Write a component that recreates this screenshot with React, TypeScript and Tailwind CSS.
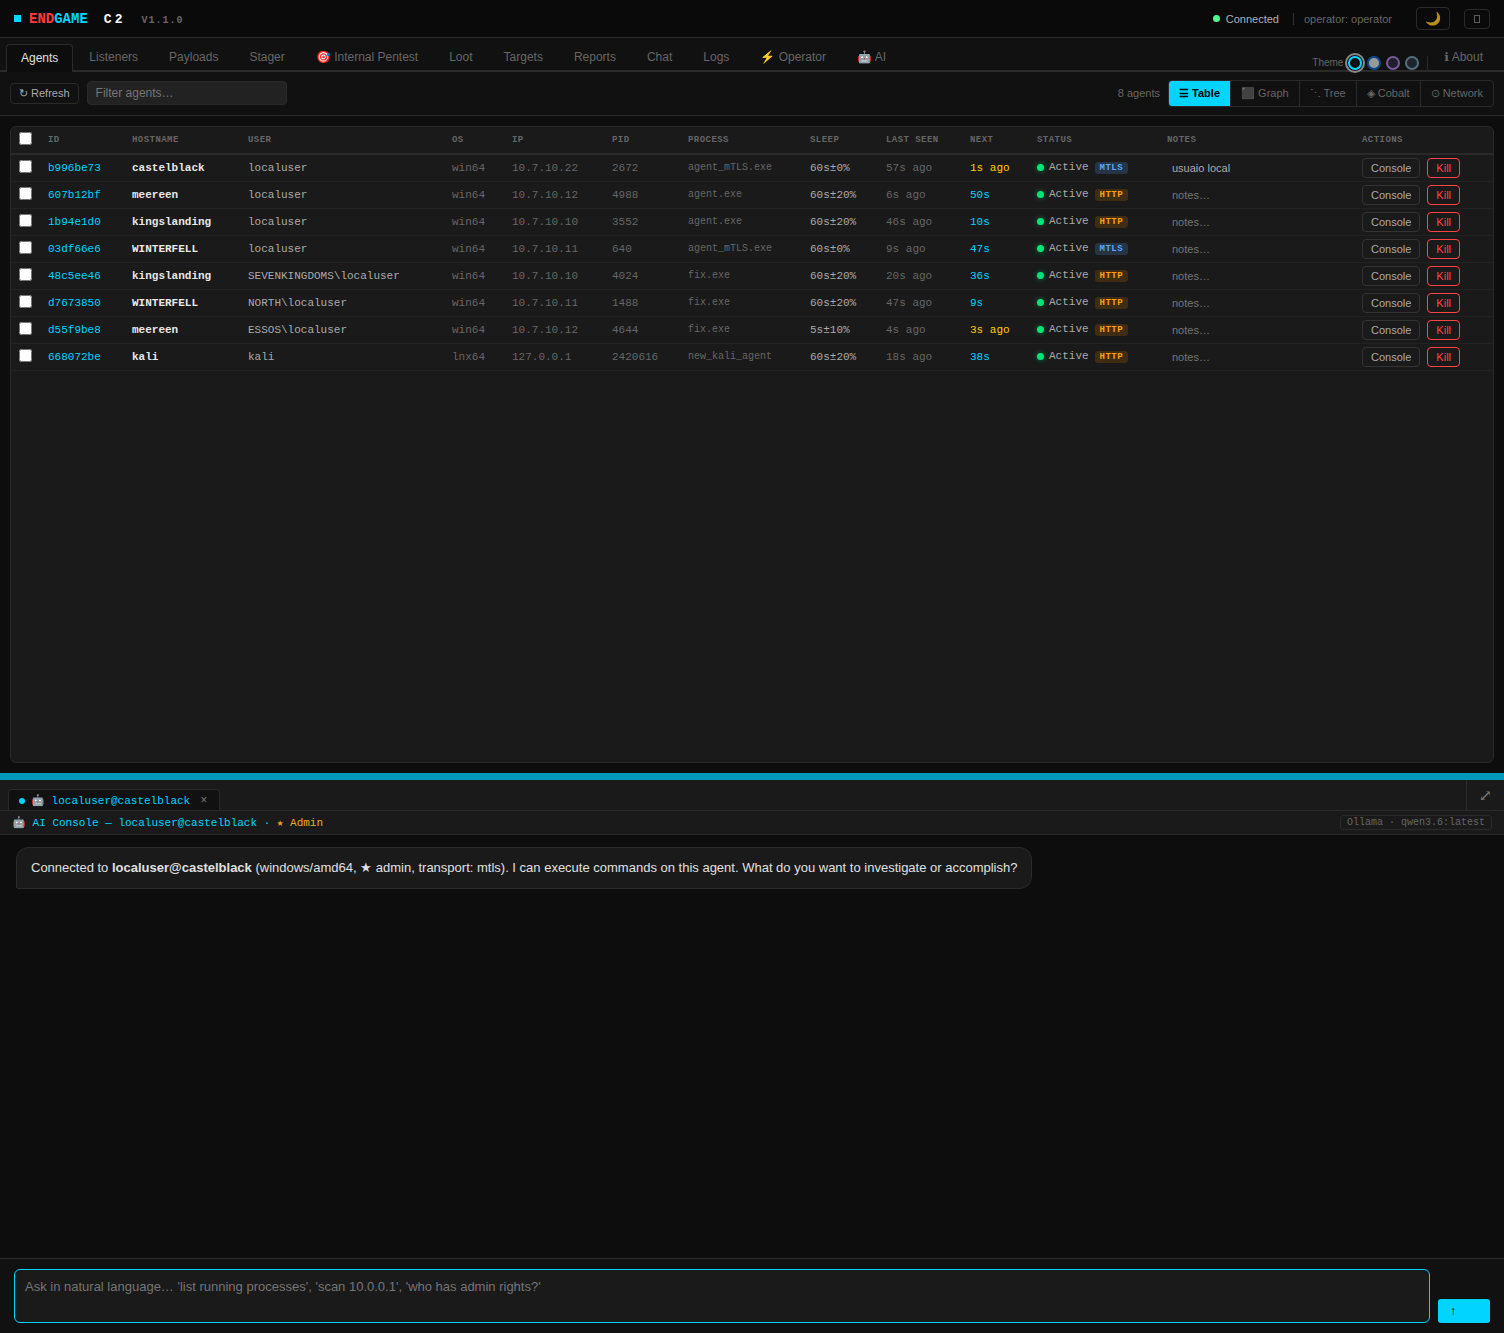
import clsx from "clsx";

interface Agent {
  id: string;
  hostname: string;
  user: string;
  os: string;
  ip: string;
  pid: string;
  process: string;
  sleep: string;
  lastSeen: string;
  next: string;
  late?: boolean;
  transport: "MTLS" | "HTTP";
  notes?: string;
}

const agents: Agent[] = [
  { id: "b996be73", hostname: "castelblack", user: "localuser", os: "win64", ip: "10.7.10.22", pid: "2672", process: "agent_mTLS.exe", sleep: "60s±0%", lastSeen: "57s ago", next: "1s ago", late: true, transport: "MTLS", notes: "usuaio local" },
  { id: "607b12bf", hostname: "meereen", user: "localuser", os: "win64", ip: "10.7.10.12", pid: "4988", process: "agent.exe", sleep: "60s±20%", lastSeen: "6s ago", next: "50s", transport: "HTTP" },
  { id: "1b94e1d0", hostname: "kingslanding", user: "localuser", os: "win64", ip: "10.7.10.10", pid: "3552", process: "agent.exe", sleep: "60s±20%", lastSeen: "46s ago", next: "10s", transport: "HTTP" },
  { id: "03df66e6", hostname: "WINTERFELL", user: "localuser", os: "win64", ip: "10.7.10.11", pid: "640", process: "agent_mTLS.exe", sleep: "60s±0%", lastSeen: "9s ago", next: "47s", transport: "MTLS" },
  { id: "48c5ee46", hostname: "kingslanding", user: "SEVENKINGDOMS\\localuser", os: "win64", ip: "10.7.10.10", pid: "4024", process: "fix.exe", sleep: "60s±20%", lastSeen: "20s ago", next: "36s", transport: "HTTP" },
  { id: "d7673850", hostname: "WINTERFELL", user: "NORTH\\localuser", os: "win64", ip: "10.7.10.11", pid: "1488", process: "fix.exe", sleep: "60s±20%", lastSeen: "47s ago", next: "9s", transport: "HTTP" },
  { id: "d55f9be8", hostname: "meereen", user: "ESSOS\\localuser", os: "win64", ip: "10.7.10.12", pid: "4644", process: "fix.exe", sleep: "5s±10%", lastSeen: "4s ago", next: "3s ago", late: true, transport: "HTTP" },
  { id: "668072be", hostname: "kali", user: "kali", os: "lnx64", ip: "127.0.0.1", pid: "2420616", process: "new_kali_agent", sleep: "60s±20%", lastSeen: "18s ago", next: "38s", transport: "HTTP" },
];

const tabs = [
  "Agents",
  "Listeners",
  "Payloads",
  "Stager",
  "🎯 Internal Pentest",
  "Loot",
  "Targets",
  "Reports",
  "Chat",
  "Logs",
  "⚡ Operator",
  "🤖 AI",
];

const themes = [
  { name: "Dark", swatch: "relative z-10 border-[#00d4ff] bg-[#0d0d0d] outline-2 outline-offset-1 outline-[#888]" },
  { name: "Light", swatch: "border-[#0b4a8a] bg-[#999]" },
  { name: "Purple", swatch: "border-[#775a99] bg-[#211f2c]" },
  { name: "Slate", swatch: "border-[#52707c] bg-[#1e242c]" },
];

const views = ["☰ Table", "⬛ Graph", "⋱ Tree", "◈ Cobalt", "⊙ Network"];

const columns = [
  { label: "ID", width: "w-[84px]" },
  { label: "Hostname", width: "w-[116px]" },
  { label: "User", width: "w-[204px]" },
  { label: "OS", width: "w-[60px]" },
  { label: "IP", width: "w-[100px]" },
  { label: "PID", width: "w-[76px]" },
  { label: "Process", width: "w-[122px]" },
  { label: "Sleep", width: "w-[76px]" },
  { label: "Last Seen", width: "w-[84px]" },
  { label: "Next", width: "w-[67px]" },
  { label: "Status", width: "w-[130px]" },
  { label: "Notes", width: "w-[195px]" },
  { label: "Actions", width: "w-[139px]" },
];

const mono = "font-['Liberation_Mono',monospace]";

const Header = () => (
  <header className="flex h-[38px] shrink-0 items-center justify-between border-b border-[#2a2a2a] bg-[#0a0a0a] px-3.5">
    <h1 className={clsx(mono, "flex items-center font-bold")}>
      <span className="mr-2 size-[7px] bg-[#00d4ff]" />
      <span className="text-sm text-[#ff3b3b]">END</span>
      <span className="text-sm text-[#00d4ff]">GAME</span>
      <span className="ml-4 pt-0.5 text-[13px] tracking-[3px] text-white">C2</span>
      <span className="ml-4 pt-1 text-[10px] tracking-[1px] text-[#666]">V1.1.0</span>
    </h1>
    <div className="flex items-center text-[11px]">
      <span className="mr-1.5 size-[7px] rounded-full bg-[#4cff88]" />
      <span className="pt-px text-[#b0b0b0]">Connected</span>
      <span className="ml-3.5 border-l border-[#333] pl-2.5 leading-3 text-[#666]">operator: operator</span>
      <button
        aria-label="Toggle dark mode"
        className="ml-6 flex h-[23px] w-[34px] items-center justify-center rounded border border-[#2a2a2a] text-[13px]"
      >
        <span className="opacity-70">🌙</span>
      </button>
      <button
        aria-label="Fullscreen"
        className="ml-3.5 flex h-5 w-[26px] items-center justify-center rounded border border-[#2a2a2a]"
      >
        <span className="h-2 w-1.5 border border-[#5a5a5a]" />
      </button>
    </div>
  </header>
);

const TabBar = () => (
  <nav className="flex h-[34px] shrink-0 items-end border-b-2 border-[#2a2a2a] bg-[#111] px-1.5">
    <div className="flex items-end gap-px">
      {tabs.map((tab, index) => (
        <button
          key={tab}
          className={clsx(
            "rounded-t border border-b-0 px-3.5 pb-0.5 text-xs whitespace-nowrap",
            index === 0
              ? "-mb-0.5 h-[28px] border-[#2a2a2a] bg-[#0d0d0d] text-[#e0e0e0]"
              : "h-[26px] border-transparent text-[#666]"
          )}
        >
          {tab}
        </button>
      ))}
    </div>
    <div className="ml-auto flex items-center gap-[5px] border-r border-[#2a2a2a] pr-2">
      <span className="text-[10px] leading-[14px] text-[#666]">Theme</span>
      {themes.map((theme) => (
        <button
          key={theme.name}
          aria-label={`${theme.name} theme`}
          className={clsx("size-3.5 rounded-full border-2", theme.swatch)}
        />
      ))}
    </div>
    <button className="h-[26px] px-4 pr-[15px] text-xs text-[#666]">
      <span className="font-['DejaVu_Sans',sans-serif]">ℹ</span> About
    </button>
  </nav>
);

const Toolbar = () => (
  <div className="flex h-11 shrink-0 items-center gap-2 border-b border-[#2a2a2a] bg-[#111] px-2.5 pb-px">
    <button className="h-[21px] rounded border border-[#2a2a2a] px-2 text-[11px] text-[#aaa]">↻ Refresh</button>
    <input
      type="text"
      aria-label="Filter agents"
      placeholder="Filter agents…"
      className="h-6 w-[200px] rounded border border-[#2a2a2a] bg-[#222] px-2 text-xs text-[#ccc] placeholder:text-[#757575]"
    />
    <span className="ml-auto text-[11px] text-[#666]">{agents.length} agents</span>
    <div className="flex h-[27px] overflow-hidden rounded border border-[#2a2a2a]">
      {views.map((view, index) => (
        <button
          key={view}
          className={clsx(
            "px-2.5 text-[11px]",
            index === 0
              ? "bg-[#00d4ff] font-bold text-black"
              : "border-l border-[#2a2a2a] text-[#666]"
          )}
        >
          {view}
        </button>
      ))}
    </div>
  </div>
);

const AgentRow = ({ agent }: { agent: Agent }) => (
  <tr className="h-[27px]">
    <td className="px-2">
      <input type="checkbox" aria-label={`Select ${agent.id}`} className="mb-1 block size-[13px]" />
    </td>
    <td className="px-2 text-[#00d4ff]">{agent.id}</td>
    <td className="px-2 font-bold text-[#e8e8e8]">{agent.hostname}</td>
    <td className="px-2">{agent.user}</td>
    <td className="px-2 text-[#666]">{agent.os}</td>
    <td className="px-2 text-[#666]">{agent.ip}</td>
    <td className="px-2 text-[#666]">{agent.pid}</td>
    <td className="px-2 pb-0.5 text-[10px] text-[#666]">{agent.process}</td>
    <td className="px-2">{agent.sleep}</td>
    <td className="px-2 text-[#666]">{agent.lastSeen}</td>
    <td className={clsx("px-2", agent.late ? "text-[#ffcc00]" : "text-[#00d4ff]")}>{agent.next}</td>
    <td className="px-2">
      <div className="mb-0.5 flex items-center">
        <span className="mr-[5px] size-[7px] rounded-full bg-[#00e676] shadow-[0_0_5px_#00e67680]" />
        <span className="leading-4">Active</span>
        <span
          className={clsx(
            "mt-px ml-1.5 rounded-[3px] px-[5px] text-[9px] leading-3 font-bold tracking-wider",
            agent.transport === "MTLS" ? "bg-[#253545] text-[#58a6ff]" : "bg-[#3f2d13] text-[#ff9f0a]"
          )}
        >
          {agent.transport}
        </span>
      </div>
    </td>
    <td className="px-2">
      <input
        type="text"
        aria-label={`Notes for ${agent.id}`}
        defaultValue={agent.notes}
        placeholder="notes…"
        className="block w-full px-[5px] pb-px font-['Liberation_Sans',sans-serif] leading-4 placeholder:text-[#757575]"
      />
    </td>
    <td className="px-2">
      <div className="flex gap-[7px] font-['Liberation_Sans',sans-serif]">
        <button className="h-5 rounded border border-[#333] px-2 pt-px">Console</button>
        <button className="h-5 rounded border border-[#ff4444] px-2 pt-px text-[#ff4444]">Kill</button>
      </div>
    </td>
  </tr>
);

const AgentTable = () => (
  <div className="m-2.5 min-h-0 flex-1 overflow-auto rounded-md border border-[#2a2a2a] bg-[#1a1a1a]">
    <table
      className={clsx(
        mono,
        "w-full table-fixed border-separate border-spacing-0 text-left text-[11px] whitespace-nowrap text-[#aaa] [&_td]:border-b [&_td]:border-[#222]"
      )}
    >
      <thead>
        <tr className="h-7">
          <th className="w-[29px] border-b-2 border-[#2a2a2a] px-2">
            <input type="checkbox" aria-label="Select all agents" className="mb-1 block size-[13px]" />
          </th>
          {columns.map((column) => (
            <th
              key={column.label}
              className={clsx(
                column.width,
                "border-b-2 border-[#2a2a2a] px-2 pt-px text-[9px] font-bold tracking-wider text-[#666] uppercase"
              )}
            >
              {column.label}
            </th>
          ))}
        </tr>
      </thead>
      <tbody>
        {agents.map((agent) => (
          <AgentRow key={agent.id} agent={agent} />
        ))}
      </tbody>
    </table>
  </div>
);

const Console = () => (
  <section className="flex min-h-0 flex-1 flex-col">
    <div
      className={clsx(
        mono,
        "flex h-[31px] shrink-0 items-end justify-between border-b border-[#2a2a2a] bg-[#1a1a1a] pl-2 text-[11px]"
      )}
    >
      <div className="flex h-[21px] items-center rounded-t border border-b-0 border-[#2a2a2a] bg-[#111] px-2.5 pt-0.5">
        <span className="mr-1.5 size-1.5 rounded-full bg-[#00d4ff]" />
        <span className="text-[#00d4ff]">🤖 localuser@castelblack</span>
        <button aria-label="Close tab" className="ml-2.5 w-[9px] text-left text-xs text-[#777]">
          ×
        </button>
      </div>
      <button
        aria-label="Expand console"
        className="h-full w-[38px] border-l border-[#2a2a2a] pt-0.5 font-['DejaVu_Serif',serif] text-base text-[#777]"
      >
        ⤢
      </button>
    </div>

    <div
      className={clsx(
        mono,
        "flex h-6 shrink-0 items-center justify-between border-b border-[#2a2a2a] bg-[#1a1a1a] px-3 text-[11px]"
      )}
    >
      <p className="pt-0.5 text-[#00d4ff]">
        🤖 AI Console — localuser@castelblack · <span className="text-[#f5a623]">★ Admin</span>
      </p>
      <span className="rounded-[3px] border border-[#2a2a2a] px-1.5 text-[10px] leading-[13px] text-[#666]">
        Ollama · qwen3.6:latest
      </span>
    </div>

    <div className="min-h-0 flex-1 overflow-auto px-4 py-3">
      <p className="w-fit rounded-xl rounded-bl-xs border border-[#2a2a2a] bg-[#1a1a1a] px-3.5 py-2.5 text-[13px] leading-5 text-[#e0e0e0]">
        Connected to <strong>localuser@castelblack</strong> (windows/amd64, ★ admin, transport: mtls). I can execute
        commands on this agent. What do you want to investigate or accomplish?
      </p>
    </div>

    <form className="flex shrink-0 items-end gap-2 border-t border-[#2a2a2a] bg-[#111] px-3.5 py-2.5">
      <textarea
        aria-label="Ask the AI console"
        placeholder="Ask in natural language… 'list running processes', 'scan 10.0.0.1', 'who has admin rights?'"
        className="block h-[54px] flex-1 resize-none rounded-md border border-[#00d4ff] bg-[#1a1a1a] px-2.5 py-2 text-[13px] leading-[18px] text-[#e0e0e0] placeholder:text-[#757575]"
      />
      <button
        type="button"
        aria-label="Send"
        className="h-6 w-[52px] rounded-[3px] bg-[#00d4ff] px-3 text-left text-xs text-black"
      >
        ↑
      </button>
    </form>
  </section>
);

const App = () => (
  <div className="flex h-screen flex-col bg-[#0d0d0d] font-['Liberation_Sans',sans-serif]">
    <main className="flex h-[58vh] shrink-0 flex-col">
      <Header />
      <TabBar />
      <Toolbar />
      <AgentTable />
    </main>
    <div role="separator" className="h-[7px] shrink-0 cursor-row-resize bg-[#0099bb]" />
    <Console />
  </div>
);

export default App;
